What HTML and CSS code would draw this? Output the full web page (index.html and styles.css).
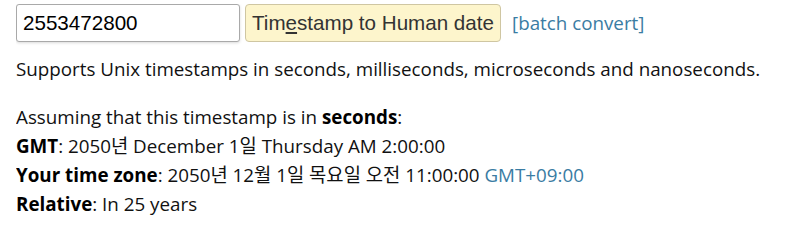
FILE: index.html
```html
<!DOCTYPE html>
<html>
<head>
<meta charset="utf-8">
<link rel="stylesheet" href="styles.css">
</head>
<body>
<form class="convert-form">
  <input class="ts-input" type="text" value="2553472800">
  <button class="ts-button" type="button">Tim<u>e</u>stamp to Human date</button>
  <a class="batch-link" href="#">[batch convert]</a>
</form>
<p class="note">Supports Unix timestamps in seconds, milliseconds, microseconds and nanoseconds.</p>
<p class="result">Assuming that this timestamp is in <b>seconds</b>:<br>
<b>GMT</b>: 2050년 December 1일 Thursday AM 2:00:00<br>
<b>Your time zone</b>: 2050년 12월 1일 목요일 오전 11:00:00 <span class="tz">GMT+09:00</span><br>
<b>Relative</b>: In 25 years</p>
</body>
</html>
```
FILE: styles.css
```css
html, body {
  background: #fff;
}
body {
  margin: 4px 16px;
  font-family: "Open Sans", "Noto Sans CJK KR", sans-serif;
  font-size: 18.8px;
  line-height: 29px;
  color: #111;
}
.convert-form {
  display: flex;
  align-items: center;
  height: 38px;
  margin: 0;
}
.ts-input {
  box-sizing: border-box;
  width: 224px;
  height: 38px;
  margin: 0;
  padding: 0 6px;
  border: 1px solid #a9a9a9;
  border-radius: 3px;
  box-shadow: 0 1px 3px rgba(0,0,0,0.15);
  font-family: "Liberation Sans", Arial, sans-serif;
  font-size: 20.6px;
  color: #000;
  outline: none;
}
.ts-button {
  box-sizing: border-box;
  width: 256px;
  height: 38px;
  margin: 0 0 0 5px;
  padding: 0;
  border: 1px solid #cfc6a2;
  border-radius: 4px;
  background: #fdf5cc;
  font-family: "Liberation Sans", Arial, sans-serif;
  font-size: 20.6px;
  color: #333;
}
.batch-link {
  margin-left: 11px;
  color: #3a7ca3;
  text-decoration: none;
}
.note {
  margin: 13px 0 19px;
}
.result {
  margin: 0;
}
.result b {
  font-weight: 700;
  color: #000;
}
.tz {
  color: #3a7ca3;
}
```
